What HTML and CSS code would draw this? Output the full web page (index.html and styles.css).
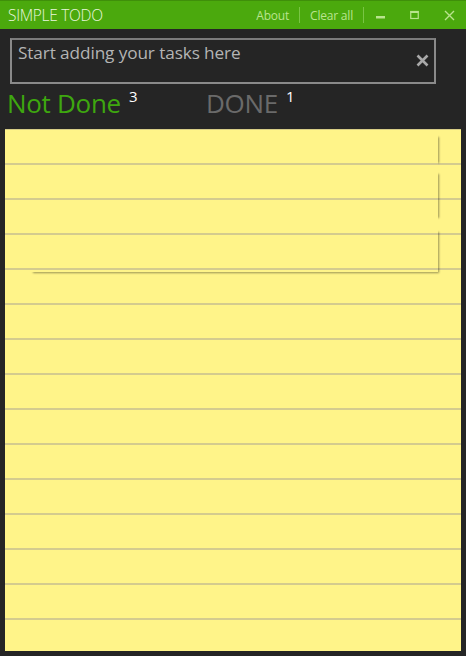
FILE: index.html
```html
<!DOCTYPE html>
<html lang="en">
<head>
  <meta charset="UTF-8">
  <meta name="viewport" content="width=device-width, initial-scale=1.0">
  <title>Simple Todo</title>
  <link rel="stylesheet" href="styles.css">
</head>
<body>
  <div class="window">

    <div class="titlebar">
      <span class="app-title">SIMPLE TODO</span>
      <div class="title-actions">
        <a class="title-link">About</a>
        <span class="sep"></span>
        <a class="title-link">Clear all</a>
        <span class="sep"></span>
        <button class="win-btn" aria-label="Minimize">
          <svg width="10" height="10" viewBox="0 0 10 10"><rect x="0" y="6" width="9" height="2.5" fill="#b9e48e"/></svg>
        </button>
        <button class="win-btn" aria-label="Maximize">
          <svg width="10" height="10" viewBox="0 0 10 10"><rect x="0.75" y="1.5" width="7.5" height="7" fill="none" stroke="#b9e48e" stroke-width="1.2"/><rect x="0.5" y="1" width="8" height="2" fill="#b9e48e"/></svg>
        </button>
        <button class="win-btn" aria-label="Close">
          <svg width="11" height="11" viewBox="0 0 11 11"><path d="M1 1 L10 10 M10 1 L1 10" stroke="#b9e48e" stroke-width="1.4"/></svg>
        </button>
      </div>
    </div>

    <div class="task-input">
      <span class="placeholder">Start adding your tasks here</span>
      <svg class="clear-icon" width="13" height="13" viewBox="0 0 13 13"><path d="M1.5 1.5 L11.5 11.5 M11.5 1.5 L1.5 11.5" stroke="#a9a9a9" stroke-width="2.6"/></svg>
    </div>

    <div class="tabs">
      <div class="tab active">Not Done<sup class="count">3</sup></div>
      <div class="tab">DONE<sup class="count">1</sup></div>
    </div>

    <div class="paper">
      <div class="cards">
        <div class="card"></div>
        <div class="card tall"></div>
        <div class="card last"></div>
      </div>
    </div>

  </div>
</body>
</html>
```

FILE: styles.css
```css
/* Page */
body {
  margin: 0;
  padding: 0;
  background-color: #252525;
  font-family: 'Open Sans', 'Noto Sans', sans-serif;
}

.window {
  width: 466px;
  height: 656px;
  background-color: #252525;
  display: flex;
  flex-direction: column;
  box-sizing: border-box;
}

/* Title bar */
.titlebar {
  height: 29px;
  background-color: #4ba90d;
  border-top: 1px solid #3f8f0a;
  box-sizing: border-box;
  display: flex;
  align-items: center;
  justify-content: space-between;
  padding-left: 8px;
}

.app-title {
  color: #eaf7de;
  font-size: 15.5px;
  font-weight: 300;
  letter-spacing: -0.3px;
}

.title-actions {
  display: flex;
  align-items: center;
  height: 100%;
}

.title-link {
  color: #b9e48e;
  font-size: 12px;
  padding: 0 10px;
  letter-spacing: -0.2px;
}

.sep {
  width: 1px;
  height: 16px;
  background-color: #79c544;
}

.win-btn {
  width: 34px;
  height: 100%;
  border: none;
  background: none;
  padding: 0;
  display: flex;
  align-items: center;
  justify-content: center;
}

/* Task input */
.task-input {
  margin: 9px 30px 0 10px;
  height: 46px;
  border: 2px solid #8a8a8a;
  border-top-color: #7c7c7c;
  box-sizing: border-box;
  display: flex;
  justify-content: space-between;
  padding: 1px 5px 0 6px;
}

.placeholder {
  color: #b4b4b4;
  font-size: 17.2px;
  letter-spacing: -0.1px;
}

.clear-icon {
  margin-top: 13px;
}

/* Tabs */
.tabs {
  height: 45px;
  display: flex;
  align-items: flex-start;
  padding-left: 7px;
}

.tab {
  color: #6a6a6a;
  font-size: 26px;
  line-height: 1;
  margin-top: 6px;
  width: 199px;
  letter-spacing: -0.3px;
}

.tab.active {
  color: #3ea70f;
}

.count {
  color: #ffffff;
  font-size: 15px;
  vertical-align: top;
  position: relative;
  top: -1px;
  margin-left: 8px;
}

/* Lined paper */
.paper {
  flex: 1;
  margin: 0 5px 5px 5px;
  background-color: #fff489;
  background-image: linear-gradient(
    to bottom,
    transparent 33px,
    #d4cb8e 33px,
    #d4cb8e 35px
  );
  background-size: 100% 35px;
  border-top: 1px solid #d7cd86;
  box-sizing: border-box;
}

.cards {
  margin: 5px 23px 0 23px;
  display: flex;
  flex-direction: column;
}

.card {
  height: 30px;
  box-shadow: 3px 0 2px -2px rgba(0, 0, 0, 0.4);
  margin-bottom: 7px;
}

.card.tall {
  height: 48px;
}

.card.last {
  height: 45px;
  margin-bottom: 0;
  box-shadow: 3px 3px 2px -2px rgba(0, 0, 0, 0.4);
}
```
